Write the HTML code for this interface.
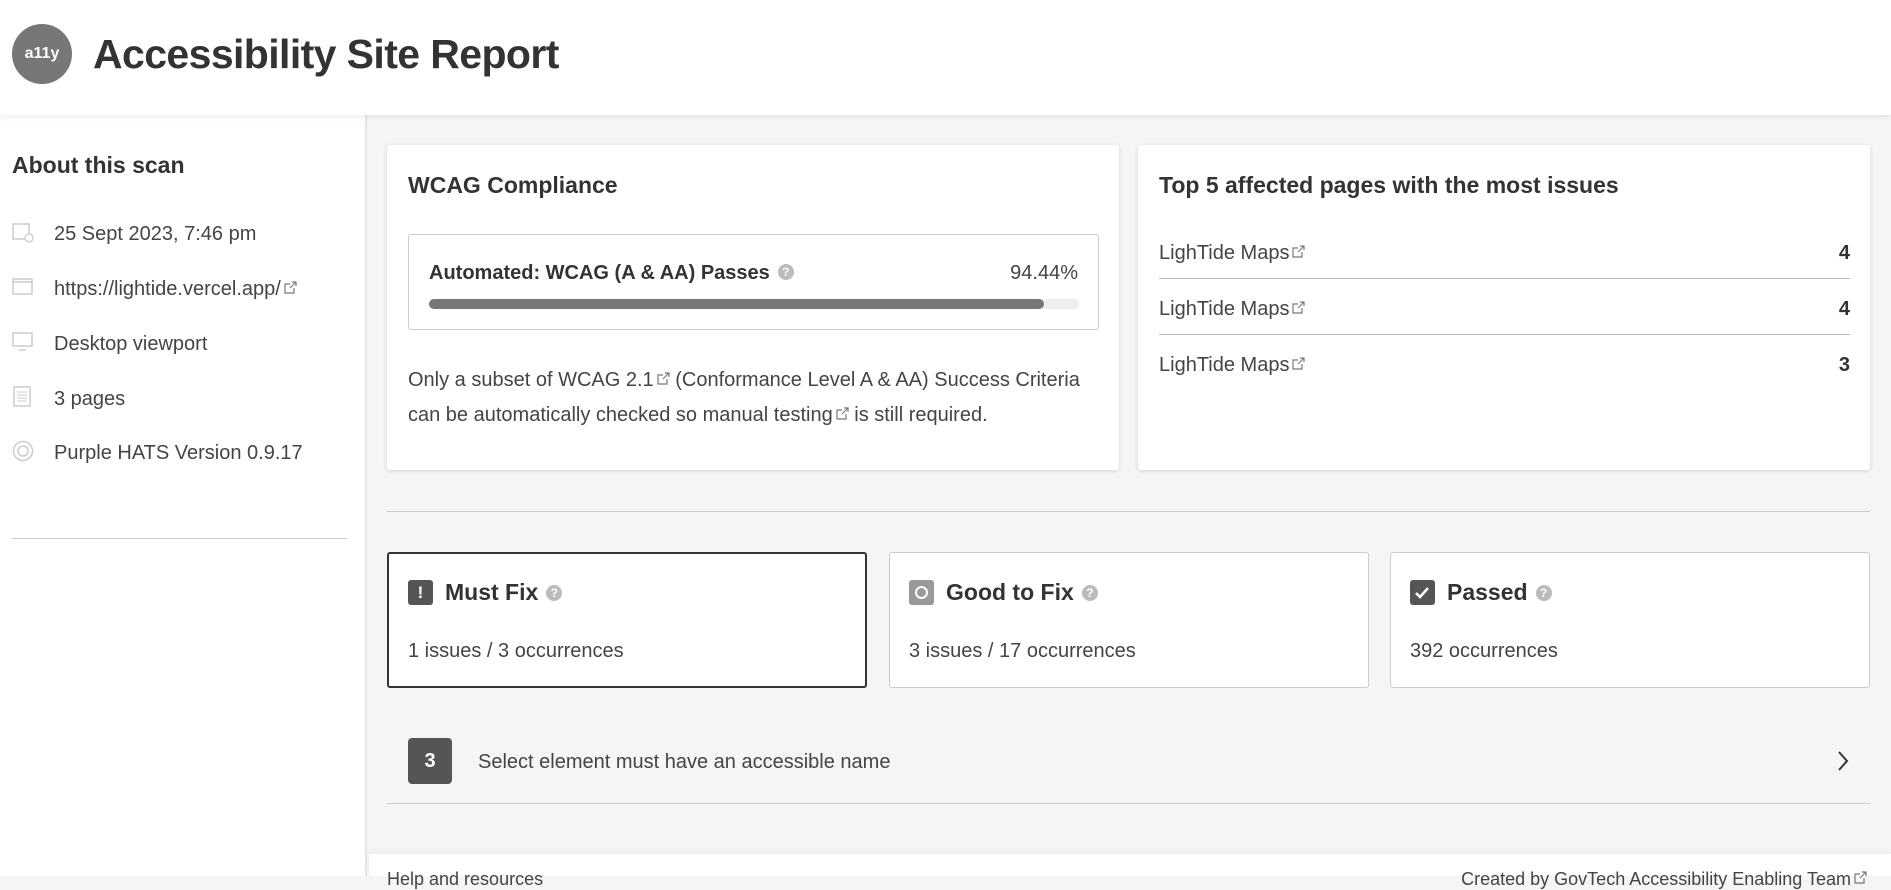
<!DOCTYPE html>
<html><head><meta charset="utf-8"><style>
*{box-sizing:border-box;margin:0;padding:0}
body{width:1891px;height:876px;overflow:hidden;background:#f5f5f5;font-family:"Liberation Sans",sans-serif;color:#333;position:relative}
.a{position:absolute;white-space:nowrap}
.hdr{left:0;top:0;width:1891px;height:115px;background:#fff;box-shadow:0 2px 6px rgba(0,0,0,.08);z-index:2}
.side{left:0;top:115px;width:367px;height:761px;background:#fff;border-right:2px solid #e6e6e6}
.card{background:#fff;box-shadow:0 1px 5px rgba(0,0,0,.15);border-radius:3px}
.t{font-size:20px;color:#444}
.h{font-size:23px;font-weight:bold;color:#333}
.ext{display:inline-block;width:13px;height:13px;vertical-align:1px;margin-left:3px}
.box{background:#fff;border:1px solid #ccc;border-radius:3px}
.q{display:inline-block;width:16px;height:16px;border-radius:50%;background:#bbb;color:#fff;font-size:12px;text-align:center;line-height:16px;vertical-align:3px;margin-left:8px;font-weight:bold}
</style></head><body>
<svg width="0" height="0" style="position:absolute"><defs><symbol id="ex" viewBox="0 0 13 13"><path d="M10 7v5H1V3h5M8 1h4v4M12 1L6 7" fill="none" stroke="#777" stroke-width="1.2"/></symbol></defs></svg>
<div class="a hdr">
 <div class="a" style="left:12px;top:24px;width:60px;height:60px;border-radius:50%;background:#777;color:#fff;font-weight:bold;font-size:16px;text-align:center;line-height:60px">a11y</div>
 <div class="a" style="left:93px;top:31px;font-size:41px;font-weight:bold;color:#333;letter-spacing:-0.6px">Accessibility Site Report</div>
</div>
<div class="a side">
 <div class="a h" style="left:12px;top:37px;font-size:23px">About this scan</div>
 <svg class="a" style="left:12px;top:106px" width="22" height="22"><rect x="1" y="3" width="16" height="15" fill="none" stroke="#ccc" stroke-width="1.5"/><circle cx="17" cy="17" r="4" fill="#fff" stroke="#ccc" stroke-width="1.3"/></svg>
 <div class="a t" style="left:54px;top:108px">25 Sept 2023, 7:46 pm</div>
 <svg class="a" style="left:12px;top:162px" width="22" height="20"><rect x="1" y="2" width="19" height="15" fill="none" stroke="#ccc" stroke-width="1.5"/><line x1="1" y1="5" x2="20" y2="5" stroke="#ccc" stroke-width="1.5"/></svg>
 <div class="a t" style="left:54px;top:163px">https://lightide.vercel.app/<svg class="ext"><use href="#ex"/></svg></div>
 <svg class="a" style="left:12px;top:216px" width="22" height="22"><rect x="1" y="2" width="19" height="13" fill="none" stroke="#ccc" stroke-width="1.5"/><line x1="7" y1="19" x2="14" y2="19" stroke="#ccc" stroke-width="1.5"/></svg>
 <div class="a t" style="left:54px;top:218px">Desktop viewport</div>
 <svg class="a" style="left:13px;top:271px" width="20" height="22"><rect x="1" y="1" width="16" height="19" fill="none" stroke="#ccc" stroke-width="1.5"/><path d="M4 6h10M4 9h10M4 12h10M4 15h10" stroke="#ccc"/></svg>
 <div class="a t" style="left:54px;top:273px">3 pages</div>
 <svg class="a" style="left:12px;top:325px" width="22" height="22"><circle cx="11" cy="11" r="9.5" fill="none" stroke="#ccc" stroke-width="1.5"/><circle cx="11" cy="11" r="5" fill="none" stroke="#ccc" stroke-width="1.5"/></svg>
 <div class="a t" style="left:54px;top:327px">Purple HATS Version 0.9.17</div>
 <div class="a" style="left:12px;top:423px;width:335px;height:1px;background:#ccc"></div>
</div>

<div class="a card" style="left:387px;top:145px;width:732px;height:325px">
 <div class="a h" style="left:21px;top:27px">WCAG Compliance</div>
 <div class="a box" style="left:21px;top:89px;width:691px;height:96px">
  <div class="a" style="left:20px;top:27px;font-size:20px;font-weight:bold;color:#333">Automated: WCAG (A &amp; AA) Passes<span class="q">?</span></div>
  <div class="a t" style="right:20px;top:27px">94.44%</div>
  <div class="a" style="left:20px;top:64px;width:650px;height:10px;border-radius:5px;background:#eee"><div style="width:615px;height:10px;border-radius:5px;background:#777"></div></div>
 </div>
 <div class="a t" style="left:21px;top:218px;line-height:35px">Only a subset of WCAG 2.1<svg class="ext"><use href="#ex"/></svg> (Conformance Level A &amp; AA) Success Criteria<br>can be automatically checked so manual testing<svg class="ext"><use href="#ex"/></svg> is still required.</div>
</div>

<div class="a card" style="left:1138px;top:145px;width:732px;height:325px">
 <div class="a h" style="left:21px;top:27px">Top 5 affected pages with the most issues</div>
 <div class="a t" style="left:21px;top:97px">LighTide Maps<svg class="ext"><use href="#ex"/></svg></div>
 <div class="a t" style="right:20px;top:97px;font-weight:bold;color:#333">4</div>
 <div class="a" style="left:21px;top:133px;width:691px;height:1px;background:#bbb"></div>
 <div class="a t" style="left:21px;top:153px">LighTide Maps<svg class="ext"><use href="#ex"/></svg></div>
 <div class="a t" style="right:20px;top:153px;font-weight:bold;color:#333">4</div>
 <div class="a" style="left:21px;top:189px;width:691px;height:1px;background:#bbb"></div>
 <div class="a t" style="left:21px;top:209px">LighTide Maps<svg class="ext"><use href="#ex"/></svg></div>
 <div class="a t" style="right:20px;top:209px;font-weight:bold;color:#333">3</div>
</div>

<div class="a" style="left:387px;top:511px;width:1483px;height:1px;background:#ccc"></div>

<div class="a box" style="left:387px;top:552px;width:480px;height:136px;border:2px solid #333">
 <div class="a" style="left:19px;top:26px;width:25px;height:25px;border-radius:3px;background:#555;color:#fff;font-weight:bold;font-size:17px;text-align:center;line-height:25px">!</div>
 <div class="a h" style="left:56px;top:25px">Must Fix<span class="q">?</span></div>
 <div class="a t" style="left:19px;top:86px">1 issues / 3 occurrences</div>
</div>
<div class="a box" style="left:889px;top:552px;width:480px;height:136px">
 <div class="a" style="left:19px;top:27px;width:25px;height:25px;border-radius:3px;background:#999"><div style="margin:6px;width:13px;height:13px;border-radius:50%;border:2px solid #fff"></div></div>
 <div class="a h" style="left:56px;top:26px">Good to Fix<span class="q">?</span></div>
 <div class="a t" style="left:19px;top:87px">3 issues / 17 occurrences</div>
</div>
<div class="a box" style="left:1390px;top:552px;width:480px;height:136px">
 <svg class="a" style="left:19px;top:27px" width="25" height="25"><rect width="25" height="25" rx="3" fill="#555"/><path d="M6 13l4 4 8-9" fill="none" stroke="#fff" stroke-width="2.5"/></svg>
 <div class="a h" style="left:56px;top:26px">Passed<span class="q">?</span></div>
 <div class="a t" style="left:19px;top:87px">392 occurrences</div>
</div>

<div class="a" style="left:408px;top:738px;width:44px;height:46px;border-radius:4px;background:#555;color:#fff;font-weight:bold;font-size:20px;text-align:center;line-height:46px">3</div>
<div class="a t" style="left:478px;top:751px">Select element must have an accessible name</div>
<svg class="a" style="left:1836px;top:750px" width="14" height="22"><path d="M3 2l8 9-8 9" fill="none" stroke="#333" stroke-width="2"/></svg>
<div class="a" style="left:387px;top:803px;width:1483px;height:1px;background:#ccc"></div>

<div class="a" style="left:369px;top:854px;width:1522px;height:22px;background:#fff;box-shadow:0 -3px 6px rgba(0,0,0,.04)">
 <div class="a" style="left:18px;top:15px;font-size:18px;color:#444">Help and resources</div>
 <div class="a" style="right:24px;top:15px;font-size:18px;color:#444">Created by GovTech Accessibility Enabling Team<svg class="ext"><use href="#ex"/></svg></div>
</div>
</body></html>
